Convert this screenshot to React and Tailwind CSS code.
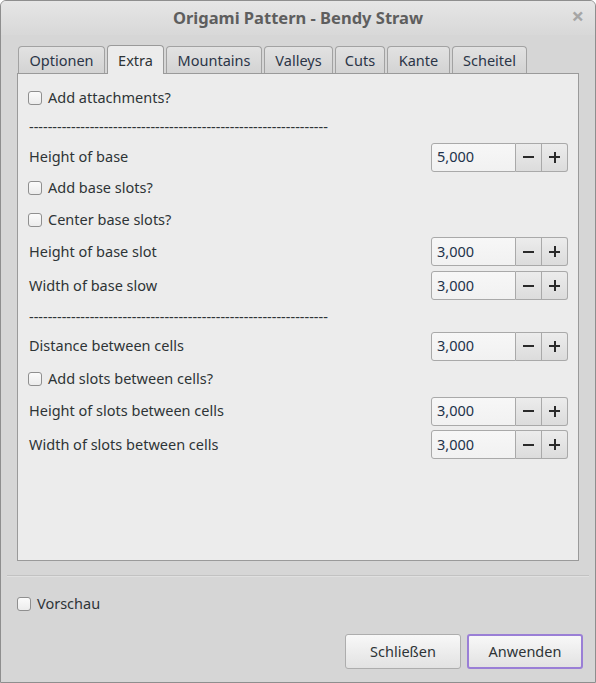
import { useState } from 'react';

const font = { fontFamily: '"Noto Sans", "Open Sans", sans-serif' };

const tabs = [
  { label: 'Optionen', w: 'w-[87px]' },
  { label: 'Extra', w: 'w-[57px]', active: true },
  { label: 'Mountains', w: 'w-[96px]' },
  { label: 'Valleys', w: 'w-[69px]' },
  { label: 'Cuts', w: 'w-[50px]' },
  { label: 'Kante', w: 'w-[63px]' },
  { label: 'Scheitel', w: 'w-[75px]' },
];

const DASHES = '-'.repeat(64);

const rows = [
  { type: 'check', label: 'Add attachments?', h: 'h-[26px]' },
  { type: 'dash', h: 'h-[31px]' },
  { type: 'spin', label: 'Height of base', value: '5,000', h: 'h-[30px]' },
  { type: 'check', label: 'Add base slots?', h: 'h-[32px]' },
  { type: 'check', label: 'Center base slots?', h: 'h-[31px]' },
  { type: 'spin', label: 'Height of base slot', value: '3,000', h: 'h-[33px]' },
  { type: 'spin', label: 'Width of base slow', value: '3,000', h: 'h-[35px]' },
  { type: 'dash', h: 'h-[27px]' },
  { type: 'spin', label: 'Distance between cells', value: '3,000', h: 'h-[32px]' },
  { type: 'check', label: 'Add slots between cells?', h: 'h-[33px]' },
  { type: 'spin', label: 'Height of slots between cells', value: '3,000', h: 'h-[32px]' },
  { type: 'spin', label: 'Width of slots between cells', value: '3,000', h: 'h-[35px]' },
];

const Checkbox = ({ label, checked, onChange }) => (
  <label className="flex items-center gap-[6px] cursor-default">
    <span
      onClick={onChange}
      className="w-[14px] h-[14px] rounded-[3px] border border-[#8f8f8f] bg-gradient-to-b from-[#fbfbfb] to-[#ececec] flex items-center justify-center text-[10px] leading-none text-[#333]"
    >
      {checked ? '✓' : ''}
    </span>
    <span>{label}</span>
  </label>
);

const Spinner = ({ value }) => (
  <div className="flex h-[29px] w-[137px]">
    <div className="flex-1 flex items-center pl-[5px] border border-[#a9a9a9] rounded-l-[3px] bg-gradient-to-b from-[#f7f7f7] to-[#f1f1f1] text-[#22324a]">
      {value}
    </div>
    <button className="w-[26px] flex items-center justify-center border-y border-r border-[#a9a9a9] bg-gradient-to-b from-[#ececec] to-[#dcdcdc]">
      <span className="block w-[11px] h-[2px] bg-[#2a2a2a]" />
    </button>
    <button className="relative w-[26px] flex items-center justify-center border-y border-r border-[#a9a9a9] rounded-r-[3px] bg-gradient-to-b from-[#ececec] to-[#dcdcdc]">
      <span className="block w-[11px] h-[2px] bg-[#2a2a2a]" />
      <span className="absolute block w-[2px] h-[11px] bg-[#2a2a2a]" />
    </button>
  </div>
);

export default function App() {
  const [checks, setChecks] = useState({});
  const [preview, setPreview] = useState(false);

  return (
    <div style={font} className="w-[596px] h-[683px] bg-[#d6d6d6] text-[14.5px] text-[#2e3436] border border-[#8e8e8e] rounded-t-[6px] flex flex-col overflow-hidden">
      {/* Title bar */}
      <div className="relative h-[34px] shrink-0 flex items-center justify-center bg-gradient-to-b from-[#e6e6e6] to-[#d8d8d8]">
        <span className="text-[16.5px] font-bold text-[#5e5e5e]">Origami Pattern - Bendy Straw</span>
        <span className="absolute right-[11px] top-[-2px] text-[22px] font-bold text-[#a6a6a6]">×</span>
      </div>

      {/* Notebook */}
      <div className="px-[16px] pt-[10px]">
        <div className="flex items-end gap-[2px] pl-[1px] h-[28px]">
          {tabs.map((t) =>
            t.active ? (
              <div
                key={t.label}
                className={`${t.w} h-[29px] -mb-px z-10 pt-px flex items-center justify-center border border-b-0 border-[#9a9a9a] rounded-t-[4px] bg-[#ececec] text-[#2e3436]`}
              >
                {t.label}
              </div>
            ) : (
              <div
                key={t.label}
                className={`${t.w} h-[27px] pt-[2px] flex items-center justify-center border border-b-0 border-[#a2a2a2] rounded-t-[4px] bg-gradient-to-b from-[#e2e2e2] to-[#d3d3d3] text-[#2b3547]`}
              >
                {t.label}
              </div>
            )
          )}
        </div>
        <div className="h-[488px] border border-[#9a9a9a] bg-[#ececec] pt-[11px] pl-[10px] pr-[10px]">
          {rows.map((r, i) => (
            <div key={i} className={`${r.h} flex items-center justify-between`}>
              {r.type === 'check' && (
                <Checkbox
                  label={r.label}
                  checked={!!checks[i]}
                  onChange={() => setChecks({ ...checks, [i]: !checks[i] })}
                />
              )}
              {r.type === 'dash' && <span className="pl-px">{DASHES}</span>}
              {r.type === 'spin' && (
                <>
                  <span className="pl-px">{r.label}</span>
                  <Spinner value={r.value} />
                </>
              )}
            </div>
          ))}
        </div>
      </div>

      {/* Separator */}
      <div className="mx-[6px] mt-[14px] h-[2px] border-t border-[#c2c2c2] border-b border-b-[#e0e0e0]" />

      {/* Preview */}
      <div className="pl-[16px] mt-[17px] h-[20px] flex items-center">
        <Checkbox label="Vorschau" checked={preview} onChange={() => setPreview(!preview)} />
      </div>

      {/* Buttons */}
      <div className="flex justify-end gap-[6px] pr-[12px] mt-[20px]">
        <button className="w-[116px] h-[35px] pt-px rounded-[3px] border border-[#adadad] bg-gradient-to-b from-[#f8f8f8] to-[#e2e2e2] text-[#2e3436]">
          Schließen
        </button>
        <button className="w-[116px] h-[35px] pt-px rounded-[3px] border-2 border-[#9a7fd6] bg-gradient-to-b from-[#f8f8f8] to-[#e2e2e2] text-[#2e3436]">
          Anwenden
        </button>
      </div>
    </div>
  );
}
